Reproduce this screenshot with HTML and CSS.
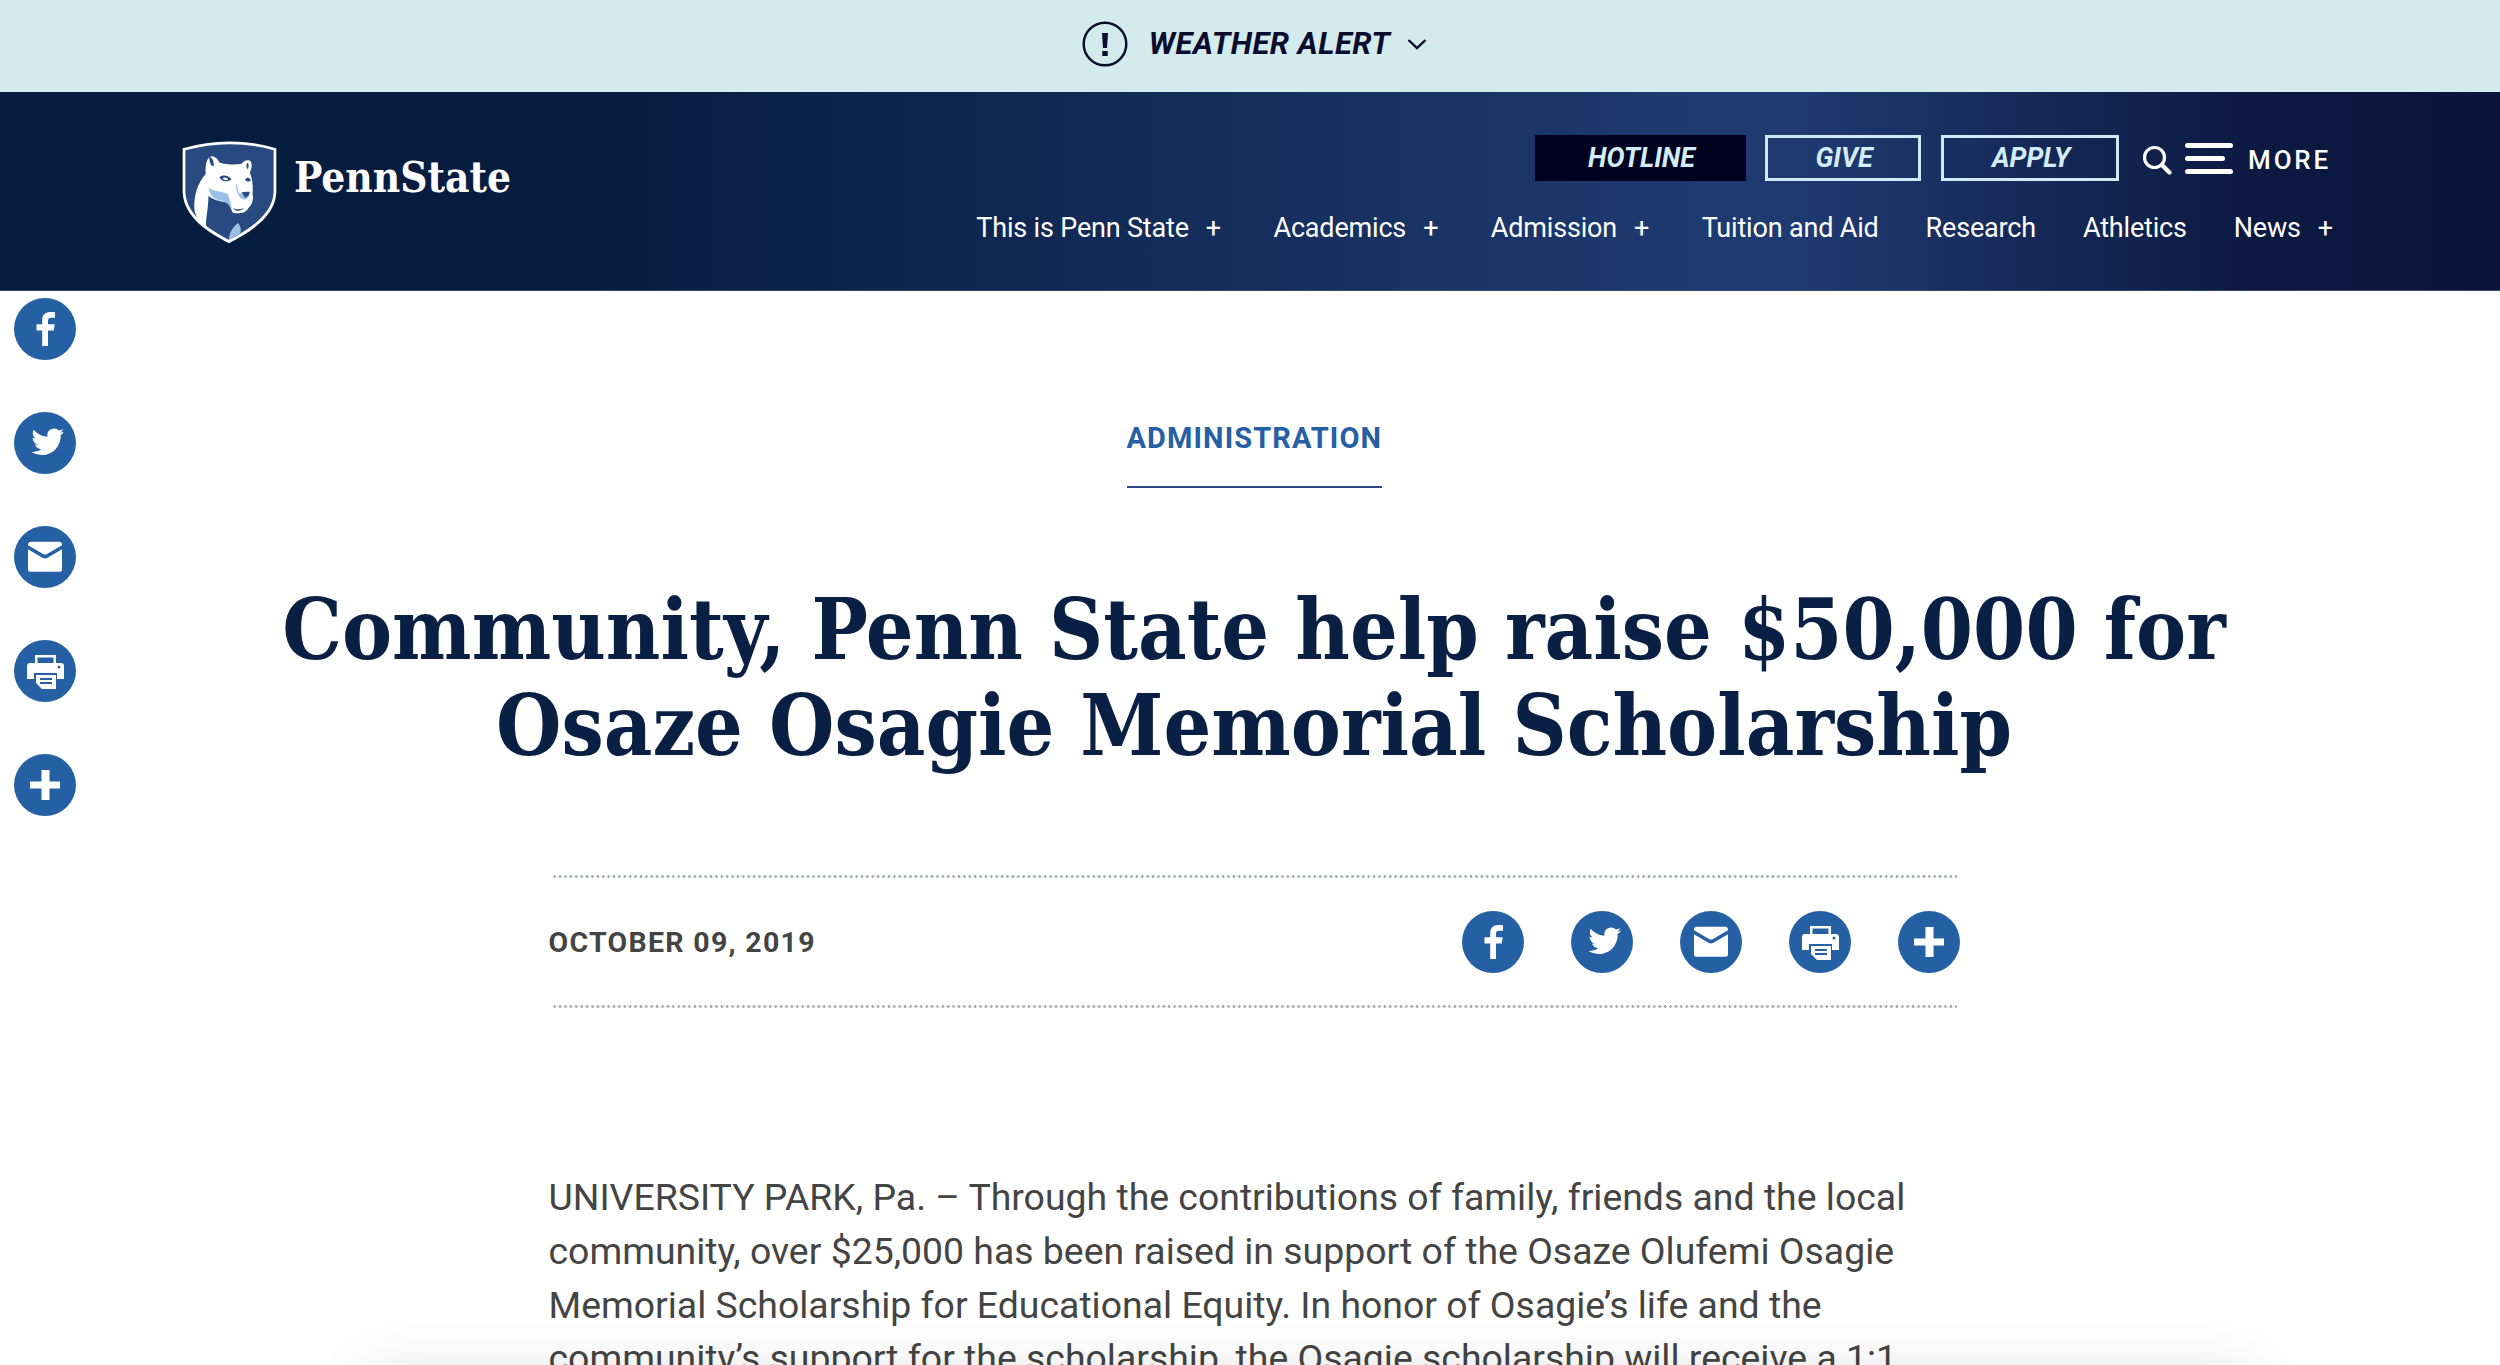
FILE: index.html
```html
<!DOCTYPE html>
<html lang="en">
<head>
<meta charset="utf-8">
<title>Community, Penn State help raise $50,000 for Osaze Osagie Memorial Scholarship</title>
<link rel="stylesheet" href="styles.css">
</head>
<body>
<svg class="defs" width="0" height="0" aria-hidden="true">
  <defs>
    <symbol id="i-fb" viewBox="0 0 62 62"><path d="M34 48V32.600h5.800l.9-6.300H34v-3.500c0-2 .9-3.100 3.300-3.100H41v-5.500c-.8-.1-2.600-.3-4.700-.3-4.800 0-8.100 2.800-8.100 8.100v4.300h-5.700v6.300h5.700V48z" fill="#fff"/></symbol>
    <symbol id="i-tw" viewBox="0 0 62 62"><path d="M50 19.500c-1.400.6-2.500.8-3.700 1 1.300-.8 2.300-2 2.800-3.500-1.300.7-2.700 1.300-4.200 1.600a6.700 6.700 0 0 0-11.400 6c-5.500-.3-10.500-2.900-13.800-6.900-.6 1-.9 2.200-.9 3.400 0 2.300 1.200 4.300 2.900 5.500-1.100 0-2.100-.3-3-.8v.1c0 3.200 2.300 5.900 5.300 6.600-.9.200-1.900.3-3 .1.800 2.600 3.300 4.600 6.300 4.600a13.500 13.500 0 0 1-10 2.800 19 19 0 0 0 10.300 3c12.400 0 19.100-10.200 19.100-19.100v-.8c1.300-1 2.500-2.200 3.300-3.600z" fill="#fff"/></symbol>
    <symbol id="i-mail" viewBox="0 0 62 62"><path d="M14 18.500a3 3 0 0 1 3-2.700h28a3 3 0 0 1 3 2.700v.8L33 28a4 4 0 0 1-4 0L14 19.300z M14 23.300l14.500 8.500a5 5 0 0 0 5 0L48 23.300v19.900a2.500 2.500 0 0 1-2.500 2.500h-29a2.500 2.500 0 0 1-2.500-2.500z" fill="#fff"/></symbol>
    <symbol id="i-print" viewBox="0 0 62 62"><path fill="#fff" fill-rule="evenodd" d="M21 15h21v8h5a3 3 0 0 1 3 3v13h-7v-6H20v6h-7V26a3 3 0 0 1 3-3h5zm2.500 2.500V23h16v-5.500zM45 25.500a1.500 1.500 0 1 0 0 3 1.500 1.500 0 0 0 0-3z"/><path fill="#fff" fill-rule="evenodd" d="M22 35h20v14H28l-6-6zm4 3v2h12v-2zm0 4v2h12v-2z"/></symbol>
    <symbol id="i-plus" viewBox="0 0 62 62"><path d="M27.500 16h8v11.500H46v7H35.500V46h-8V34.500H16v-7h11.500z" fill="#fff"/></symbol>
  </defs>
</svg>

<div class="alert">
  <svg class="alert-icon" viewBox="0 0 46 46"><circle cx="23" cy="23" r="21.300" fill="none" stroke="#0c0c2e" stroke-width="2.500"/><path d="M20 12h6l-1 15h-4zM20.300 30h5.400v5h-5.400z" fill="#0c0c2e"/></svg>
  <span class="alert-text">WEATHER ALERT</span>
  <svg class="alert-chev" viewBox="0 0 20 12"><path d="M1.500 2l8.500 8 8.500-8" fill="none" stroke="#0c0c2e" stroke-width="2.400"/></svg>
</div>

<header class="header">
  <a class="logo">
    <svg class="shield" viewBox="40 36 280 306">
      <path d="M42 60Q180 20 318 60V190C315 265 235 310 178 340C120 310 45 265 42 190Z" fill="#fff"/>
      <path d="M50 66Q180 30 310 66V190C307 258 232 302 178 330C124 302 53 258 50 190Z" fill="#294a80"/>
      <path d="M76 236C76 200 84 165 110 135C108 112 112 88 125 84C136 82 146 92 150 102C170 108 195 110 216 106C222 96 236 92 243 100C248 112 244 124 240 132C248 150 250 175 248 195C252 210 246 228 236 236C228 252 205 254 190 250C184 240 182 228 172 220C150 216 130 212 118 200C118 240 108 270 112 296C95 280 78 262 76 236Z" fill="#fff"/>
      <path d="M120 84C128 86 134 96 134 112C126 112 122 108 120 84Z" fill="#294a80"/>
      <path d="M232 103C237 105 238 114 234 122C230 118 228 112 232 103Z" fill="#294a80"/>
      <path d="M118 175C135 190 155 185 175 195C180 210 184 226 188 240C180 226 172 220 160 216C140 212 122 206 118 175Z" fill="#9dbfe6"/>
      <path d="M150 146C160 136 178 140 186 152C176 160 160 160 150 146Z" fill="#294a80"/>
      <path d="M160 148C168 144 174 148 176 152C170 156 164 155 160 148Z" fill="#fff"/>
      <path d="M226 152C232 144 240 146 243 154C238 160 230 160 226 152Z" fill="#294a80"/>
      <path d="M200 160C204 180 208 200 216 192C224 186 232 186 240 190L236 204C228 214 222 212 214 208C206 200 196 180 200 160Z" fill="#9dbfe6"/>
      <path d="M216 190L240 188L236 200L226 206Z" fill="#294a80"/>
      <path d="M190 236C200 242 214 240 222 236C216 246 198 248 190 236Z" fill="#294a80"/>
      <path d="M178 328C180 305 192 290 206 280C214 292 214 302 212 310C200 318 190 324 178 330Z" fill="#9dbfe6"/>
    </svg>
    <span class="wordmark">PennState</span>
  </a>
  <div class="header-right">
    <div class="util">
      <a class="btn btn-dark">HOTLINE</a>
      <a class="btn btn-give">GIVE</a>
      <a class="btn btn-apply">APPLY</a>
      <svg class="search" viewBox="0 0 30 30"><circle cx="12.500" cy="12.500" r="10" fill="none" stroke="#fff" stroke-width="3.200"/><path d="M20 20l7.500 7.500" stroke="#fff" stroke-width="4.200" stroke-linecap="round"/></svg>
      <span class="burger"><i></i><i class="short"></i><i></i></span>
      <span class="more">MORE</span>
    </div>
    <nav class="nav">
      <a class="nav-item">This is Penn State<b>+</b></a>
      <a class="nav-item">Academics<b>+</b></a>
      <a class="nav-item">Admission<b>+</b></a>
      <a class="nav-item">Tuition and Aid</a>
      <a class="nav-item">Research</a>
      <a class="nav-item">Athletics</a>
      <a class="nav-item">News<b class="last">+</b></a>
    </nav>
  </div>
</header>

<aside class="side-share">
  <a class="circle"><svg><use href="#i-fb"/></svg></a>
  <a class="circle"><svg><use href="#i-tw"/></svg></a>
  <a class="circle"><svg><use href="#i-mail"/></svg></a>
  <a class="circle"><svg><use href="#i-print"/></svg></a>
  <a class="circle"><svg><use href="#i-plus"/></svg></a>
</aside>

<main class="main">
  <div class="category">ADMINISTRATION</div>
  <h1 class="title">Community, Penn State help raise $50,000 for<br>Osaze Osagie Memorial Scholarship</h1>
  <div class="meta">
    <span class="date">OCTOBER 09, 2019</span>
    <div class="meta-share">
      <a class="circle"><svg><use href="#i-fb"/></svg></a>
      <a class="circle"><svg><use href="#i-tw"/></svg></a>
      <a class="circle"><svg><use href="#i-mail"/></svg></a>
      <a class="circle"><svg><use href="#i-print"/></svg></a>
      <a class="circle"><svg><use href="#i-plus"/></svg></a>
    </div>
  </div>
  <p class="body-text">UNIVERSITY PARK, Pa. – Through the contributions of family, friends and the local community, over $25,000 has been raised in support of the Osaze Olufemi Osagie Memorial Scholarship for Educational Equity. In honor of Osagie’s life and the community’s support for the scholarship, the Osagie scholarship will receive a 1:1</p>
</main>
<div class="bottom-shadow"></div>
</body>
</html>
```

FILE: styles.css
```css
* { box-sizing: border-box; }
html, body { height: 1365px; overflow: hidden; }
body { margin: 0; background: #fff; font-family: Roboto, sans-serif; color: #444; }
.defs { position: absolute; }
a { color: inherit; text-decoration: none; }

.alert { height: 92px; background: #d3ebec; display: flex; align-items: center; justify-content: center; padding-bottom: 5px; padding-left: 9px; }
.alert-icon { width: 46px; height: 46px; margin-right: 21px; }
.alert-text { font: italic 700 31px Roboto, sans-serif; color: #0c0c2e; letter-spacing: .45px; }
.alert-chev { width: 20px; height: 12px; margin-left: 17px; }

.header { height: 199px; display: flex; justify-content: space-between; padding: 48px 167px 0 182px; background: linear-gradient(90deg, #071d3f 0%, #071d3f 24%, #1f3a70 68%, #1f3a70 72%, #0c1a42 90%, #0a1438 100%); color: #fff; border-bottom: 1px solid #33486e; }
.logo { display: flex; align-items: flex-start; }
.shield { width: 95px; height: 104px; }
.wordmark { font: 700 42px "DejaVu Serif Condensed", serif; margin: 13px 0 0 17px; color: #fff; }
.header-right { display: flex; flex-direction: column; align-items: flex-end; }
.util { display: flex; align-items: center; height: 47px; margin-top: -4px; }
.btn { height: 46px; margin-bottom: 4px; display: flex; align-items: center; justify-content: center; font: italic 700 27px Roboto, sans-serif; color: #d3ecf7; padding-left: 2px; }
.btn-dark { width: 211px; background: #00001f; margin-right: 19px; }
.btn-give { width: 156px; border: 3px solid #cfeaf5; margin-right: 20px; }
.btn-apply { width: 178px; border: 3px solid #cfeaf5; margin-right: 23px; }
.search { width: 30px; height: 30px; margin-right: 13px; }
.burger { width: 48px; display: flex; flex-direction: column; gap: 8px; margin-right: 15px; margin-top: -2px; }
.burger i { height: 5px; border-radius: 3px; background: #fff; display: block; }
.burger i.short { width: 40px; }
.more { font: 500 26px Roboto, sans-serif; letter-spacing: 2.800px; margin-right: 2px; }
.nav { display: flex; margin-top: 25px; font-size: 27px; letter-spacing: -.18px; line-height: 40px; }
.nav-item { margin-left: 47px; }
.nav-item b { font-weight: 400; margin: 0 5.500px 0 17px; }
.nav-item b.last { margin-right: 0; }

.circle { width: 62px; height: 62px; border-radius: 50%; background: #2560a4; display: block; }
.circle svg { width: 62px; height: 62px; display: block; }
.side-share { position: absolute; left: 14px; top: 298px; display: flex; flex-direction: column; gap: 52px; }

.main { display: flex; flex-direction: column; align-items: center; padding-left: 8px; }
.category { margin-top: 119px; width: 255px; height: 78px; border-bottom: 2px solid #2a4a80; text-align: center; font: 700 29px/56px Roboto, sans-serif; letter-spacing: 1.100px; color: #2560a4; white-space: nowrap; }
.title { margin: 94px 0 0; font: 700 83.500px/96px "DejaVu Serif Condensed", serif; text-align: center; color: #0a1f44; white-space: nowrap; }
.meta { margin-top: 101px; width: 1411px; height: 133px; display: flex; align-items: center; justify-content: space-between; position: relative; font-weight: 700; }
.meta::before, .meta::after { content: ""; position: absolute; left: 3px; right: 3px; height: 3px; background: radial-gradient(circle at center, #a8adb0 1.300px, transparent 1.500px) 0 0 / 5.400px 3px repeat-x; }
.meta::before { top: 0; }
.meta::after { bottom: 0; }
.date { font-size: 28.500px; letter-spacing: 1.300px; color: #444; padding-top: 2px; }
.meta-share { display: flex; gap: 47px; }
.body-text { margin: 163px 0 0; width: 1411px; font-size: 37.400px; line-height: 53.800px; color: #444; }

.bottom-shadow { position: fixed; left: 380px; right: 260px; top: 1395px; height: 200px; box-shadow: 0 0 60px 10px rgba(0,0,0,.2); }
```
